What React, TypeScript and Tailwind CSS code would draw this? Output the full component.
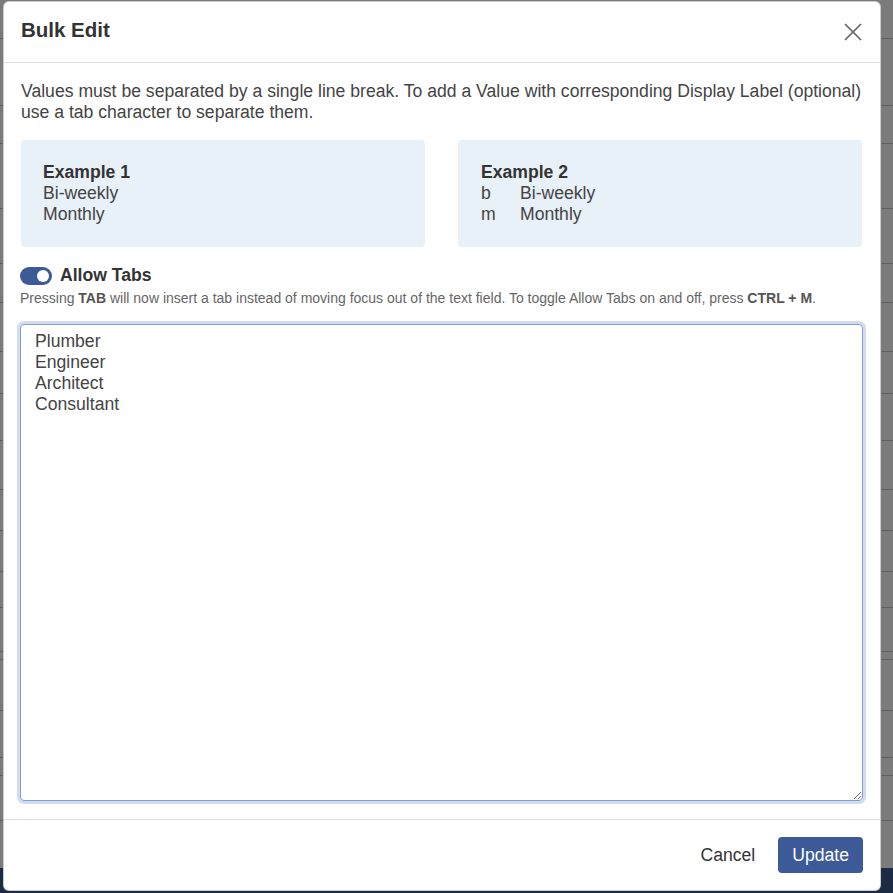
import React, { useState } from 'react';
import { X } from 'lucide-react';

const backdropRows = [38, 105, 143, 208, 263, 302, 351, 393, 440, 489, 530, 571, 607, 651, 659, 710, 757, 775, 820, 868];

const Toggle: React.FC<{ on: boolean; onChange: () => void }> = ({ on, onChange }) => (
  <button
    onClick={onChange}
    className={`relative w-[32px] h-[18px] rounded-full ${on ? 'bg-[#3c5a98]' : 'bg-[#c4c9d2]'}`}
  >
    <span
      className={`absolute top-[3px] w-[12px] h-[12px] rounded-full bg-white ${on ? 'left-[17px]' : 'left-[3px]'}`}
    />
  </button>
);

const App: React.FC = () => {
  const [allowTabs, setAllowTabs] = useState(true);

  return (
    <div className="relative w-[893px] h-[893px] overflow-hidden bg-[#7b7b7b] font-['Liberation_Sans',Arial,sans-serif]">
      {/* dimmed page behind the modal */}
      <div className="absolute inset-0">
        {backdropRows.map((y) => (
          <div key={y} className="absolute left-0 right-0 h-px bg-[#5f5f5f]" style={{ top: y }} />
        ))}
        <div className="absolute left-0 right-0 bottom-0 h-[25px] bg-[#1c2a44]" />
      </div>

      <div className="absolute left-[3px] top-[1px] w-[878px] h-[890px] bg-white rounded-[6px] border border-black/20 flex flex-col text-[#444]">
        <div className="flex items-center justify-between h-[61px] pl-[17px] pr-[12px] pb-[3px] border-b border-[#dee2e6]">
          <h1 className="text-[20.5px] font-bold text-[#333] leading-none">Bulk Edit</h1>
          <button className="text-[#666] mt-[3px]">
            <X size={30} strokeWidth={1.4} />
          </button>
        </div>

        <div className="flex-1 flex flex-col px-[17px] pt-[18px] pb-[17px]">
          <p className="text-[17.6px] leading-[21px]">
            Values must be separated by a single line break. To add a Value with corresponding Display Label (optional)
            use a tab character to separate them.
          </p>

          <div className="grid grid-cols-2 gap-[33px] mt-[17px] pr-[1px]">
            <div className="bg-[#e8f0f8] rounded-[4px] h-[107px] pl-[22px] pt-[22px] text-[17.6px] leading-[21px]">
              <div className="font-bold text-[#333]">Example 1</div>
              <div>Bi-weekly</div>
              <div>Monthly</div>
            </div>
            <div className="bg-[#e8f0f8] rounded-[4px] h-[107px] pl-[23px] pt-[22px] text-[17.6px] leading-[21px]">
              <div className="font-bold text-[#333]">Example 2</div>
              <div className="flex">
                <span className="w-[39px]">b</span>
                <span>Bi-weekly</span>
              </div>
              <div className="flex">
                <span className="w-[39px]">m</span>
                <span>Monthly</span>
              </div>
            </div>
          </div>

          <div className="flex items-center gap-[8px] mt-[18px] -ml-[1px]">
            <Toggle on={allowTabs} onChange={() => setAllowTabs(!allowTabs)} />
            <span className="text-[17.6px] font-bold text-[#333] leading-[21px]">Allow Tabs</span>
          </div>
          <p className="text-[14px] leading-[17px] text-[#666] mt-[4px] -ml-[1px]">
            Pressing <b className="text-[#555]">TAB</b> will now insert a tab instead of moving focus out of the text field. To
            toggle Allow Tabs on and off, press <b className="text-[#555]">CTRL + M</b>.
          </p>

          <textarea
            defaultValue={'Plumber\nEngineer\nArchitect\nConsultant'}
            className="mt-[17px] -ml-[1px] h-[477px] w-[843px] rounded-[4px] border border-[#7d9dd6] ring-[3px] ring-[#d3dcee] px-[14px] py-[6px] text-[17.6px] leading-[21px] text-[#444] outline-none resize-y"
          />
        </div>

        <div className="flex items-center justify-end gap-[23px] h-[71px] px-[17px] border-t border-[#dee2e6]">
          <button className="text-[17.6px] text-[#333]">Cancel</button>
          <button className="h-[36px] px-[14px] rounded-[4px] bg-[#3c5a98] text-white text-[17.6px]">Update</button>
        </div>
      </div>
    </div>
  );
};

export default App;
